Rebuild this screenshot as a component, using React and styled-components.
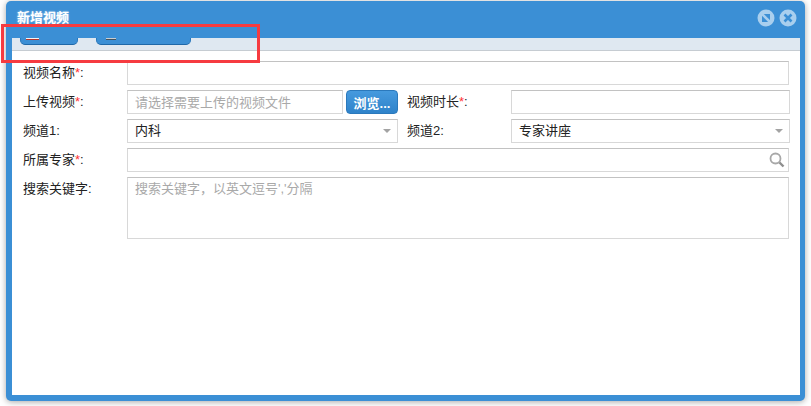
import React from 'react';
import styled, { createGlobalStyle } from 'styled-components';

const GlobalStyle = createGlobalStyle`
    html, body {
        margin: 0;
        padding: 0;
        background: #fff;
    }
    body {
        font-family: "Liberation Sans", "Noto Sans CJK SC", sans-serif;
        font-size: 13px;
        color: #222;
    }
`;

const Page = styled.div`
    position: relative;
    width: 811px;
    height: 406px;
    padding: 1px 6px 5px;
    box-sizing: border-box;
    overflow: hidden;
`;

const Dialog = styled.div`
    width: 799px;
    height: 400px;
    box-sizing: border-box;
    display: flex;
    flex-direction: column;
    background: #3b8fd5;
    border-radius: 5px;
    padding: 0 5px 6px 6px;
    box-shadow: 0 1px 6px rgba(0, 0, 0, 0.35);
`;

const TitleBar = styled.div`
    height: 37px;
    flex-shrink: 0;
    display: flex;
    justify-content: space-between;
    padding: 8px 3px 0 5px;
    box-sizing: border-box;
`;

const Title = styled.div`
    color: #fff;
    font-weight: bold;
    font-size: 13px;
    line-height: 18px;
    text-shadow: 0 0 2px rgba(255, 255, 255, 0.6);
`;

const WindowButtons = styled.div`
    display: flex;
    gap: 4px;
`;

const Toolbar = styled.div`
    height: 13px;
    flex-shrink: 0;
    box-sizing: border-box;
    display: flex;
    align-items: flex-start;
    gap: 18px;
    padding-left: 8px;
    background: #dfe8f1;
    border-bottom: 1px solid #c6ccd2;
`;

const ToolButton = styled.div`
    width: ${(p) => p.$width}px;
    height: 7px;
    flex-shrink: 0;
    box-sizing: border-box;
    display: flex;
    align-items: flex-start;
    padding-left: ${(p) => p.$inset}px;
    background: #3b8fd5;
    border: 1px solid #2a78bb;
    border-top: 0;
    border-bottom-color: #1f68a8;
    border-radius: 0 0 5px 5px;
`;

const Content = styled.div`
    flex: 1;
    background: #fff;
    padding: 10px 11px 0 11px;
`;

const Row = styled.div`
    display: flex;
    height: ${(p) => p.$height || 24}px;
    margin-bottom: 5px;
    margin-right: ${(p) => (p.$wide ? -1 : 0)}px;
`;

const Label = styled.label`
    flex: 0 0 104px;
    line-height: 24px;
    color: #222;
`;

const Required = styled.span`
    color: #f33;
`;

const Input = styled.input`
    flex: 1;
    min-width: 0;
    height: 100%;
    box-sizing: border-box;
    border: 1px solid #d8d8d8;
    border-top-color: #c2c2c2;
    padding: 0 7px;
    margin: 0;
    outline: none;
    font: inherit;
    color: #222;
    background: #fff;
    &::placeholder {
        color: #a9a9a9;
        opacity: 1;
    }
`;

const TextArea = styled(Input).attrs({ as: 'textarea' })`
    padding: 2px 7px;
    resize: none;
    line-height: 18px;
`;

const LeftField = styled.div`
    flex: 0 0 271px;
    display: flex;
    gap: 3px;
    margin-right: 9px;
`;

const FileInput = styled(Input)`
    flex: 0 0 216px;
`;

const BrowseButton = styled.button`
    flex: 1;
    height: 100%;
    padding: 0;
    border: 1px solid #2b79bc;
    border-radius: 4px;
    background: linear-gradient(#469ade, #2f83ca);
    color: #fff;
    font: inherit;
    font-weight: bold;
`;

const Select = styled.div`
    flex: 1;
    position: relative;
    height: 100%;
    box-sizing: border-box;
    border: 1px solid #d8d8d8;
    border-top-color: #c2c2c2;
    padding: 0 7px;
    line-height: 22px;
    color: #222;
    &::after {
        content: '';
        position: absolute;
        right: 6px;
        top: 9px;
        border-style: solid;
        border-width: 4px 4.5px 0;
        border-color: #a3a3a3 transparent transparent;
    }
`;

const SearchField = styled.div`
    flex: 1;
    position: relative;
    display: flex;
    height: 100%;
`;

const SearchIcon = styled.svg`
    position: absolute;
    right: 4px;
    top: 4px;
`;

const Highlight = styled.div`
    position: absolute;
    left: 1px;
    top: 24px;
    width: 259px;
    height: 39px;
    box-sizing: border-box;
    border: 3px solid #f63b40;
    pointer-events: none;
`;

function MinButton() {
    return (
        <svg width="18" height="18" viewBox="0 0 18 18">
            <circle cx="9" cy="9" r="8.5" fill="#a9cfee" />
            <rect x="5" y="5" width="8" height="8" fill="#3b8fd5" />
            <path d="M3.5 3.5 L14.5 14.5" stroke="#a9cfee" strokeWidth="2.6" />
        </svg>
    );
}

function CloseButton() {
    return (
        <svg width="18" height="18" viewBox="0 0 18 18">
            <circle cx="9" cy="9" r="8.5" fill="#a9cfee" />
            <path d="M5.5 5.5 L12.5 12.5 M12.5 5.5 L5.5 12.5" stroke="#3b8fd5" strokeWidth="2.6" />
        </svg>
    );
}

export default function App() {
    return (
        <Page>
            <GlobalStyle />
            <Dialog>
                <TitleBar>
                    <Title>新增视频</Title>
                    <WindowButtons>
                        <MinButton />
                        <CloseButton />
                    </WindowButtons>
                </TitleBar>
                <Toolbar>
                    <ToolButton $width={58} $inset={5}>
                        <svg width="13" height="2" viewBox="0 0 13 2">
                            <rect width="13" height="1" fill="#f4f4f4" />
                            <rect y="1" width="13" height="1" fill="#b5342a" />
                        </svg>
                    </ToolButton>
                    <ToolButton $width={95} $inset={9}>
                        <svg width="10" height="2" viewBox="0 0 10 2">
                            <rect width="10" height="1" fill="#c9ced2" />
                            <rect y="1" width="10" height="1" fill="#44525c" />
                        </svg>
                    </ToolButton>
                </Toolbar>
                <Content>
                    <Row>
                        <Label>视频名称<Required>*</Required>:</Label>
                        <Input />
                    </Row>
                    <Row $wide>
                        <Label>上传视频<Required>*</Required>:</Label>
                        <LeftField>
                            <FileInput placeholder="请选择需要上传的视频文件" />
                            <BrowseButton>浏览...</BrowseButton>
                        </LeftField>
                        <Label>视频时长<Required>*</Required>:</Label>
                        <Input />
                    </Row>
                    <Row $wide>
                        <Label>频道1:</Label>
                        <LeftField>
                            <Select>内科</Select>
                        </LeftField>
                        <Label>频道2:</Label>
                        <Select>专家讲座</Select>
                    </Row>
                    <Row>
                        <Label>所属专家<Required>*</Required>:</Label>
                        <SearchField>
                            <Input />
                            <SearchIcon width="16" height="16" viewBox="0 0 16 16">
                                <circle cx="6.5" cy="6.5" r="5" fill="none" stroke="#a8a8a8" strokeWidth="1.8" />
                                <path d="M10.5 10.5 L14.5 14.5" stroke="#8e8e8e" strokeWidth="2.4" />
                            </SearchIcon>
                        </SearchField>
                    </Row>
                    <Row $height={62}>
                        <Label>搜索关键字:</Label>
                        <TextArea placeholder="搜索关键字，以英文逗号','分隔" />
                    </Row>
                </Content>
            </Dialog>
            <Highlight />
        </Page>
    );
}
